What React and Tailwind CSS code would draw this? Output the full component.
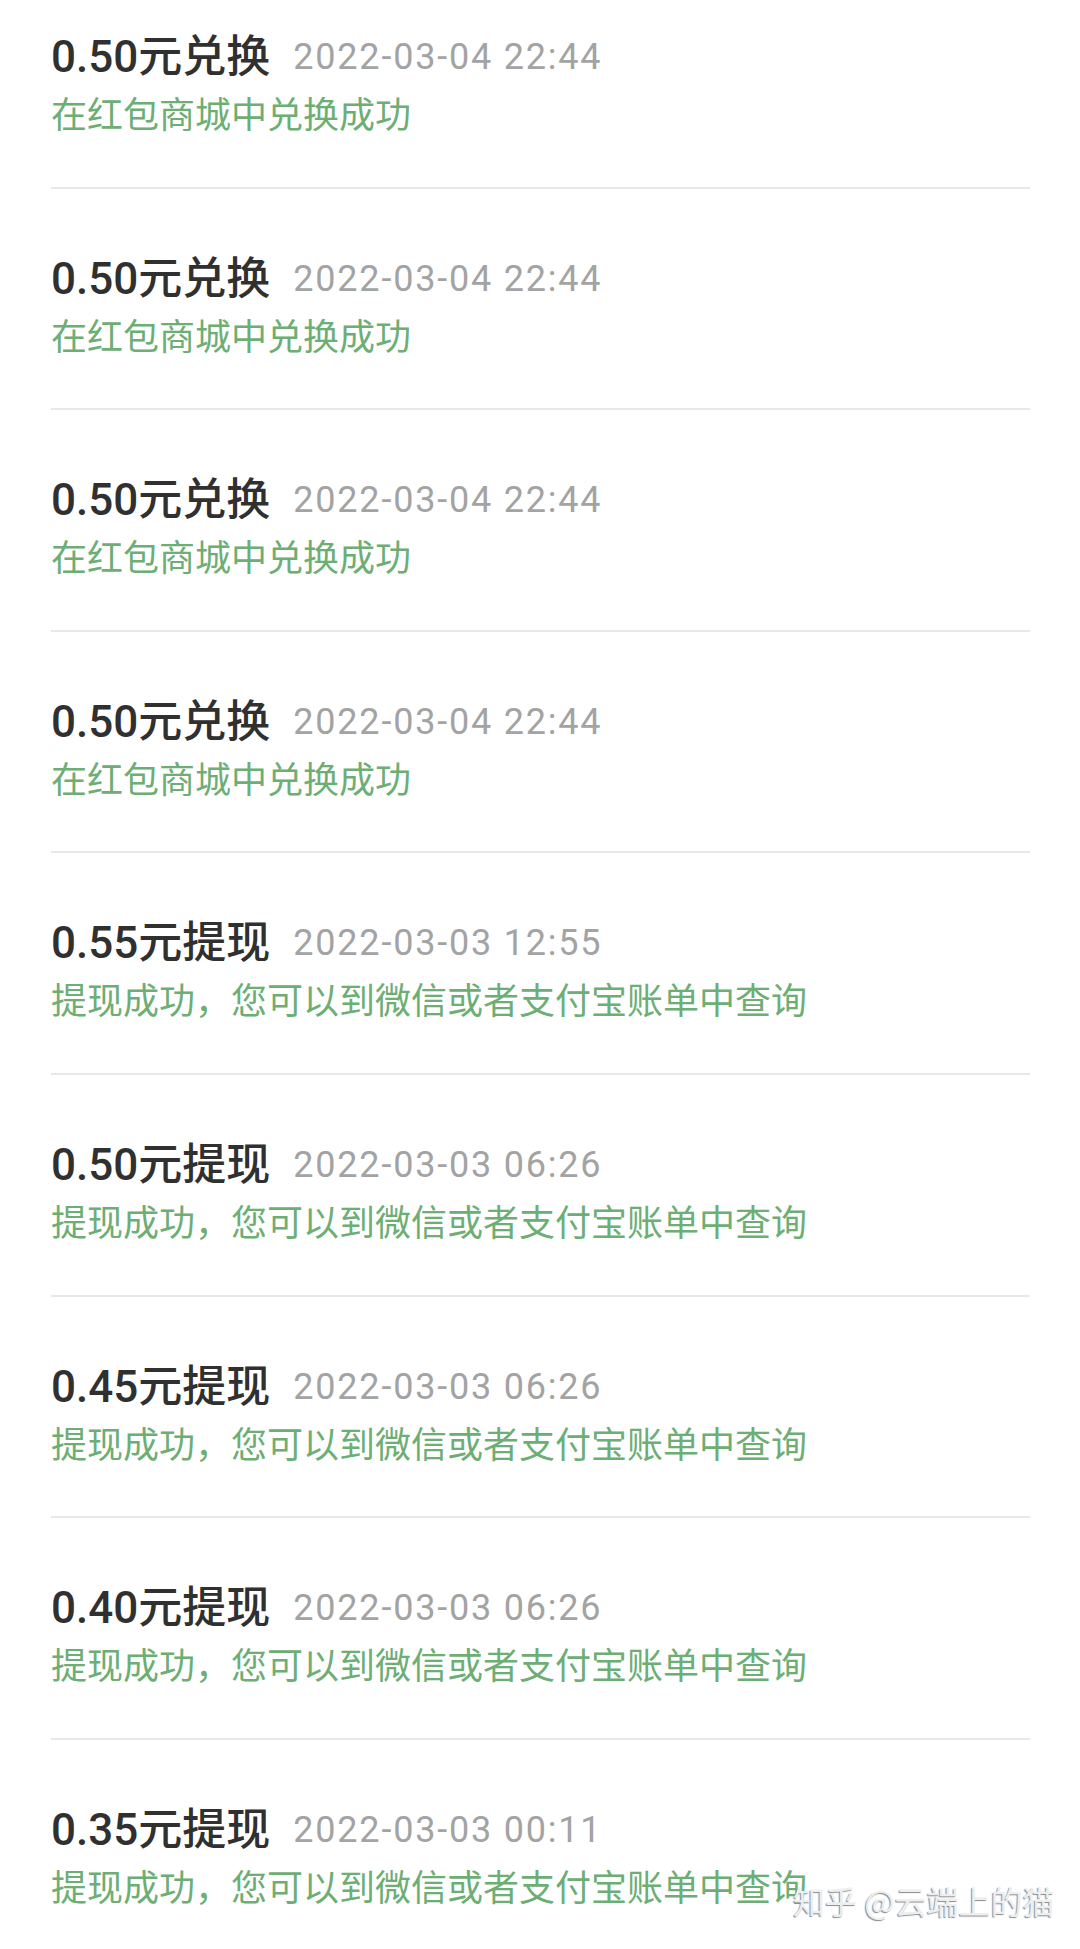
const rows = [
  { amount: "0.50元兑换", time: "2022-03-04 22:44", note: "在红包商城中兑换成功" },
  { amount: "0.50元兑换", time: "2022-03-04 22:44", note: "在红包商城中兑换成功" },
  { amount: "0.50元兑换", time: "2022-03-04 22:44", note: "在红包商城中兑换成功" },
  { amount: "0.50元兑换", time: "2022-03-04 22:44", note: "在红包商城中兑换成功" },
  { amount: "0.55元提现", time: "2022-03-03 12:55", note: "提现成功，您可以到微信或者支付宝账单中查询" },
  { amount: "0.50元提现", time: "2022-03-03 06:26", note: "提现成功，您可以到微信或者支付宝账单中查询" },
  { amount: "0.45元提现", time: "2022-03-03 06:26", note: "提现成功，您可以到微信或者支付宝账单中查询" },
  { amount: "0.40元提现", time: "2022-03-03 06:26", note: "提现成功，您可以到微信或者支付宝账单中查询" },
  { amount: "0.35元提现", time: "2022-03-03 00:11", note: "提现成功，您可以到微信或者支付宝账单中查询" },
];

export default function App() {
  return (
    <div className="relative w-[1080px] h-[1949px] overflow-hidden bg-white font-['Roboto','Noto_Sans_CJK_SC',sans-serif]">
      {/* record list */}
      <div className="pl-[51px] pr-[50px]">
        {rows.map((r, i) => (
          <div
            key={i}
            className="pt-[62px] first:pt-[29px] pb-[46.6px] border-b-2 border-[#e8e8e8]"
          >
            <div className="flex items-center h-[56px]">
              <span className="text-[44px] leading-[56px] font-medium text-[#303030]">
                {r.amount}
              </span>
              <span className="ml-[23px] text-[36px] leading-[56px] tracking-[1.8px] text-[#a3a3a3]">
                {r.time}
              </span>
            </div>
            <div className="mt-[7px] text-[36px] leading-[48px] text-[#6dae74]">
              {r.note}
            </div>
          </div>
        ))}
      </div>

      {/* watermark */}
      <div className="absolute left-[793px] top-[1880px] text-[32px] leading-[40px] text-[#eeeeee] font-['Noto_Sans_CJK_SC',sans-serif] [text-shadow:-1px_1px_1px_#8a8a8a] whitespace-nowrap">
        知乎 @云端上的猫
      </div>
    </div>
  );
}
